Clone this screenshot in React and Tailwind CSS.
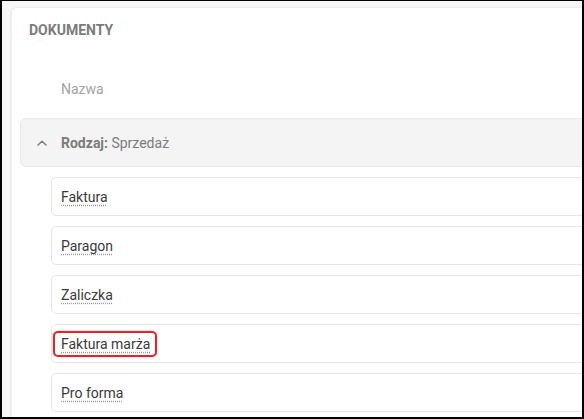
import React from 'react';

// Document types listed under the "Sprzedaż" group
const documents = [
    { id: 1, name: 'Faktura' },
    { id: 2, name: 'Paragon' },
    { id: 3, name: 'Zaliczka' },
    { id: 4, name: 'Faktura marża', highlighted: true },
    { id: 5, name: 'Pro forma' },
];

const ChevronUp = () => (
    <svg width="10" height="6" viewBox="0 0 10 6" fill="none">
        <polyline points="1,5 5,1.2 9,5" stroke="#7a7a7a" strokeWidth="1.4" strokeLinecap="round" strokeLinejoin="round" />
    </svg>
);

const App = () => {
    return (
        <div
            className="w-[584px] h-[419px] overflow-hidden border-t border-l-2 border-r-2 border-b-2 border-black bg-[#f7f7f7] pl-[9px] pt-[6px]"
            style={{ fontFamily: 'Roboto, "Liberation Sans", sans-serif' }}
        >
            <div className="w-[620px] h-[430px] bg-white rounded-md border border-[#ececec] shadow-[0_1px_3px_rgba(0,0,0,0.08)] px-2">
                {/* Section header */}
                <div className="pl-[9px] pt-[14px] text-[14px] leading-[16px] font-bold text-[#7b7b7b]">
                    DOKUMENTY
                </div>

                <div className="mt-[41px] pl-[41px] text-[14px] leading-5 text-[#a3a3a3]">Nazwa</div>

                {/* Group row */}
                <div className="mt-[19px] h-[49px] flex items-center bg-[#f4f4f4] border border-[#e8e8e8] rounded-md">
                    <div className="w-[40px] flex justify-center pl-[1px]">
                        <ChevronUp />
                    </div>
                    <div className="text-[14px] leading-5 text-[#7b7b7b]">
                        <span className="font-bold">Rodzaj:</span> Sprzedaż
                    </div>
                </div>

                {/* Document list */}
                <div className="ml-[31px] mt-[10px] flex flex-col gap-[10px]">
                    {documents.map((doc) => (
                        <div
                            key={doc.id}
                            className="h-[39px] flex items-center pl-[9px] bg-white border border-[#e6e6e6] rounded-[5px]"
                        >
                            <span className="relative text-[14px] leading-5 text-[#3a3a3a] underline decoration-dotted decoration-[#9a9a9a] underline-offset-[3px]">
                                {doc.name}
                                {doc.highlighted && (
                                    <span className="absolute -left-[8px] -right-[7px] -top-[3px] -bottom-[3px] border-2 border-[#e0262b] rounded-[5px] shadow-[0_0_2px_rgba(224,38,43,0.4)]"></span>
                                )}
                            </span>
                        </div>
                    ))}
                </div>
            </div>
        </div>
    );
};

export default App;
